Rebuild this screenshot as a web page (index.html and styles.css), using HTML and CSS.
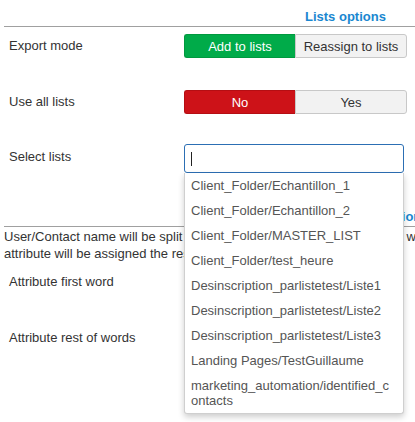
FILE: index.html
```html
<!DOCTYPE html>
<html lang="en">
<head>
    <meta charset="UTF-8">
    <meta name="viewport" content="width=device-width, initial-scale=1.0">
    <title>Export options</title>
    <link rel="stylesheet" href="styles.css">
</head>
<body>
    <div class="frame">
    <div class="panel">
        <section class="group">
            <div class="group-title">Lists options</div>
            <div class="row">
                <label>Export mode</label>
                <div class="toggle">
                    <button class="active green">Add to lists</button>
                    <button>Reassign to lists</button>
                </div>
            </div>
            <div class="row">
                <label>Use all lists</label>
                <div class="toggle">
                    <button class="active red">No</button>
                    <button>Yes</button>
                </div>
            </div>
            <div class="row row-select">
                <label>Select lists</label>
                <div class="picker">
                    <div class="picker-input"></div>
                    <ul class="picker-menu">
                        <li>Client_Folder/Echantillon_1</li>
                        <li>Client_Folder/Echantillon_2</li>
                        <li>Client_Folder/MASTER_LIST</li>
                        <li>Client_Folder/test_heure</li>
                        <li>Desinscription_parlistetest/Liste1</li>
                        <li>Desinscription_parlistetest/Liste2</li>
                        <li>Desinscription_parlistetest/Liste3</li>
                        <li>Landing Pages/TestGuillaume</li>
                        <li>marketing_automation/identified_contacts</li>
                    </ul>
                </div>
            </div>
        </section>
        <section class="group">
            <div class="group-title">Name splits options</div>
            <p class="group-desc">User/Contact name will be split into words. First attribute gets the first word, second attribute will be assigned the rest of words.</p>
            <div class="row">
                <label>Attribute first word</label>
                <div></div>
            </div>
            <div class="row">
                <label>Attribute rest of words</label>
                <div></div>
            </div>
        </section>
    </div>
    </div>
</body>
</html>
```

FILE: styles.css
```css
body {
    margin: 0;
    background: #fff;
    font-family: "Liberation Sans", Arial, sans-serif;
    font-size: 13px;
    color: #333;
}
.frame {
    width: 415px;
    height: 422px;
    overflow: hidden;
}
.panel {
    width: 500px;
    padding: 9px 0 0 4px;
}
.group + .group {
    margin-top: 36px;
}
.group-title {
    padding: 0 0 1px 301px;
    line-height: 16px;
    font-weight: bold;
    color: #1a87d0;
    border-bottom: 1px solid #a0a0a0;
}
.group-desc {
    margin: 0;
    padding: 1px 0 1px;
    line-height: 17px;
}
.row {
    display: grid;
    grid-template-columns: 180px 223px;
    align-items: center;
    min-height: 24px;
    padding: 7px 0 25px;
}
.row label {
    padding-left: 5px;
    line-height: 16px;
}
.row-select {
    padding: 5px 0 0;
}
.row-select label {
    margin-top: -3px;
}

/* segmented buttons */
.toggle {
    display: flex;
    height: 24px;
}
.toggle button {
    flex: 1;
    margin: 0;
    padding: 0;
    font: inherit;
    color: #333;
    background: #f2f2f2;
    border: 1px solid #c8c8c8;
    border-radius: 0 3px 3px 0;
}
.toggle button:first-child {
    border-radius: 3px 0 0 3px;
    border-right: none;
}
.toggle button.active {
    color: #fff;
}
.toggle button.green {
    background: #00ab49;
    border-color: #00993f;
}
.toggle button.red {
    background: #cd1218;
    border-color: #b50e13;
}

/* list picker */
.picker {
    position: relative;
    width: 220px;
}
.picker-input {
    box-sizing: border-box;
    height: 29px;
    border: 1px solid #2c6fb4;
    border-radius: 3px;
    position: relative;
}
.picker-input::before {
    content: "";
    position: absolute;
    left: 6px;
    top: 7px;
    width: 1px;
    height: 14px;
    background: #222;
}
.picker-menu {
    position: absolute;
    top: 100%;
    left: 0;
    right: 0;
    margin: 0;
    padding: 0;
    list-style: none;
    background: #fff;
    border: 1px solid #cfcfcf;
    border-top: none;
    border-radius: 0 0 3px 3px;
    box-shadow: 0 3px 6px rgba(0, 0, 0, 0.2);
    z-index: 2;
}
.picker-menu li {
    padding: 5px 8px 5px 6px;
    line-height: 15px;
    color: #555;
    word-break: break-all;
}
```
